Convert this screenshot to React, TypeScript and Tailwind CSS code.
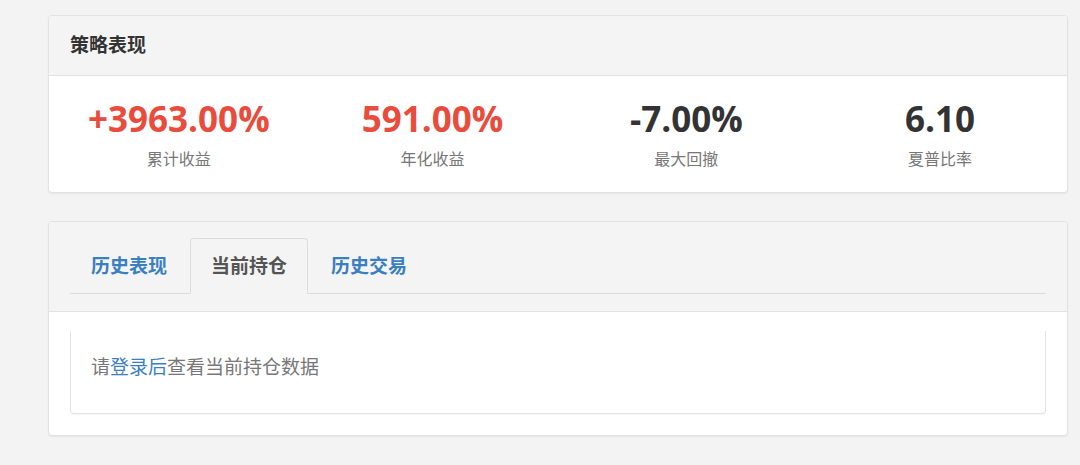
const STATS = [
  { value: "+3963.00%", label: "累计收益", tone: "text-[#e74c3c]" },
  { value: "591.00%", label: "年化收益", tone: "text-[#e74c3c]" },
  { value: "-7.00%", label: "最大回撤", tone: "text-[#333]" },
  { value: "6.10", label: "夏普比率", tone: "text-[#333]" },
];

const TABS = ["历史表现", "当前持仓", "历史交易"];

const cjk = "font-['Open_Sans','Noto_Sans_CJK_SC',sans-serif]";

export default function App() {
  const active = 1;

  return (
    <div className={`min-h-[465px] bg-[#f3f3f3] pt-[15px] pl-[48px] pr-[12px] pb-[30px] ${cjk}`}>
      {/* 策略表现 */}
      <div className="bg-white border border-[#e2e2e2] rounded-[4px] shadow-[0_1px_2px_rgba(0,0,0,0.06)] overflow-hidden">
        <div className="h-[60px] bg-[#f4f4f4] border-b border-[#e2e2e2] flex items-center px-[21px]">
          <h3 className="text-[19px] font-bold text-[#333]">策略表现</h3>
        </div>
        <div className="grid grid-cols-4 pt-[21px] pb-[21px] pl-[3px]">
          {STATS.map((s) => (
            <div key={s.label} className="flex flex-col items-center">
              <div className={`text-[35px] leading-[44px] font-bold ${s.tone}`}>{s.value}</div>
              <div className="mt-[6px] text-[16px] leading-[24px] text-[#777]">{s.label}</div>
            </div>
          ))}
        </div>
      </div>

      {/* 持仓 tabs */}
      <div className="mt-[28px] bg-white border border-[#e2e2e2] rounded-[4px] shadow-[0_1px_2px_rgba(0,0,0,0.06)] overflow-hidden">
        <div className="bg-[#f4f4f4] border-b border-[#e2e2e2] pt-[16px] pb-[17px] px-[21px]">
          <ul className="flex border-b border-[#dcdcdc]">
            {TABS.map((t, i) => (
              <li key={t} className="mr-[2px] -mb-px">
                <button
                  className={`h-[56px] px-[20px] text-[19px] font-bold rounded-t-[4px] border ${
                    i === active
                      ? "bg-[#f4f4f4] border-[#dcdcdc] border-b-[#f4f4f4] text-[#555]"
                      : "border-transparent text-[#3a7fc0]"
                  }`}
                >
                  {t}
                </button>
              </li>
            ))}
          </ul>
        </div>
        <div className="pt-[19px] pb-[21px] px-[21px]">
          <div className="h-[83px] pt-[22px] px-[20px] border-x border-b border-[#e4e4e4] rounded-b-[4px] shadow-[0_1px_1px_rgba(0,0,0,0.04)]">
            <p className="text-[19px] leading-[28px] text-[#777]">
              请<a className="text-[#3a7fc0]">登录后</a>查看当前持仓数据
            </p>
          </div>
        </div>
      </div>
    </div>
  );
}
